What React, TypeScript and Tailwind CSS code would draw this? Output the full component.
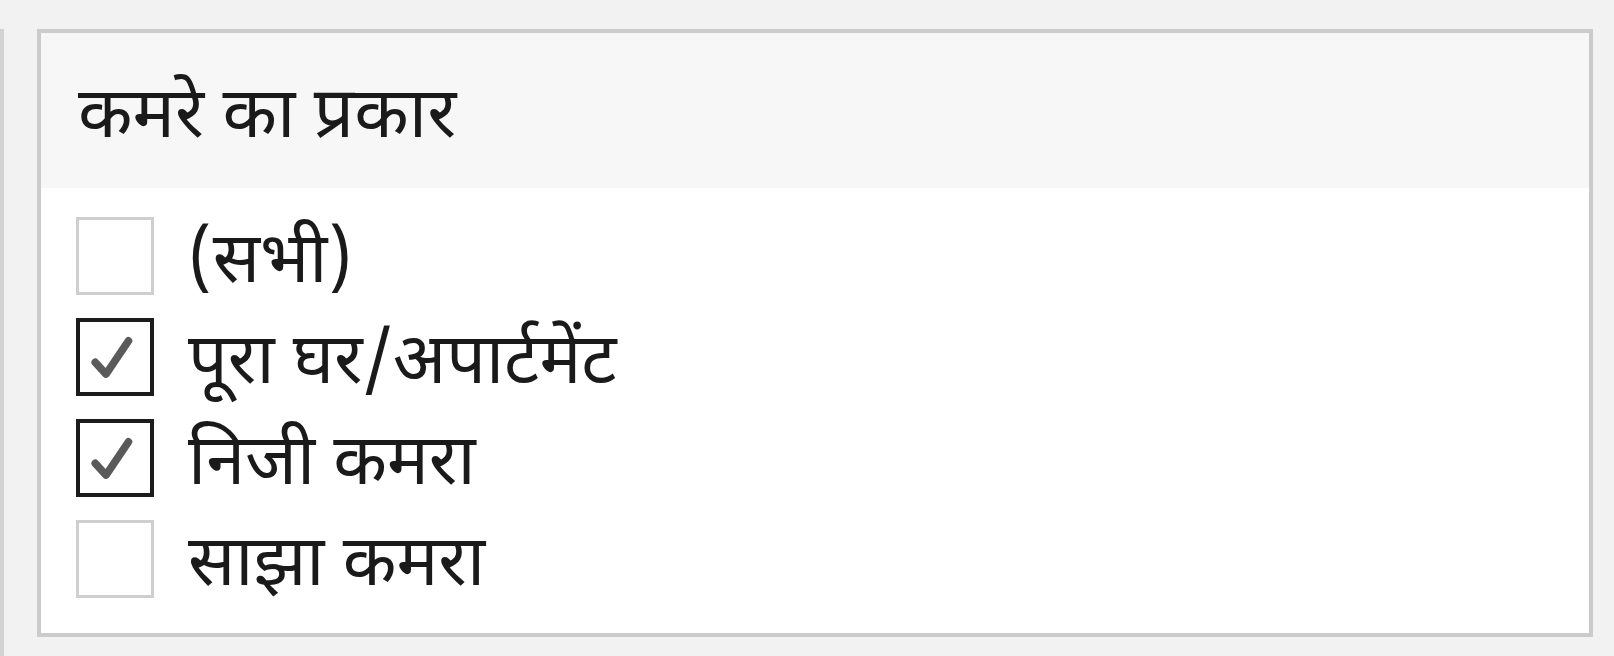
import React from 'react'

interface Option {
  label: string
  checked: boolean
}

const options: Option[] = [
  { label: '(सभी)', checked: false },
  { label: 'पूरा घर/अपार्टमेंट', checked: true },
  { label: 'निजी कमरा', checked: true },
  { label: 'साझा कमरा', checked: false },
]

const CheckBox: React.FC<{ checked: boolean }> = ({ checked }) => (
  <div
    className={
      checked
        ? 'w-[78px] h-[78px] shrink-0 border-[4px] border-[#1c1c1c] bg-white flex items-center justify-center'
        : 'w-[78px] h-[78px] shrink-0 border-[3px] border-[#cfcfcf] bg-white'
    }
  >
    {checked && (
      <svg viewBox="0 0 78 78" className="w-full h-full">
        <path
          d="M17 45 L29 58 L54 21"
          fill="none"
          stroke="#5a5a5a"
          strokeWidth="8.5"
          strokeLinecap="round"
          strokeLinejoin="round"
        />
      </svg>
    )}
  </div>
)

export default function App() {
  return (
    <div
      className="w-[1614px] h-[656px] bg-[#f2f2f2] flex pt-[29px] overflow-hidden"
      style={{ fontFamily: '"Noto Sans Devanagari", "Noto Sans", "Lohit Devanagari", sans-serif' }}
    >
      {/* edge of the neighbouring panel */}
      <div className="w-[4px] bg-[#d3d3d3]" />

      {/* Filter panel */}
      <div className="ml-[33px] w-[1556px] h-[608px] border-[4px] border-[#cbcbcb] bg-white flex flex-col">
        <div className="h-[155px] bg-[#f7f7f7] flex items-center pl-[37px]">
          <h2 className="text-[71px] leading-none text-[#1a1a1a] pt-[18px]">कमरे का प्रकार</h2>
        </div>
        <div className="flex flex-col gap-[23px] pt-[29px] pl-[35px]">
          {options.map((opt) => (
            <label key={opt.label} className="flex items-center gap-[34px] h-[78px]">
              <CheckBox checked={opt.checked} />
              <span className="text-[70px] leading-none text-[#1a1a1a] pt-[17px]">{opt.label}</span>
            </label>
          ))}
        </div>
      </div>
    </div>
  )
}
